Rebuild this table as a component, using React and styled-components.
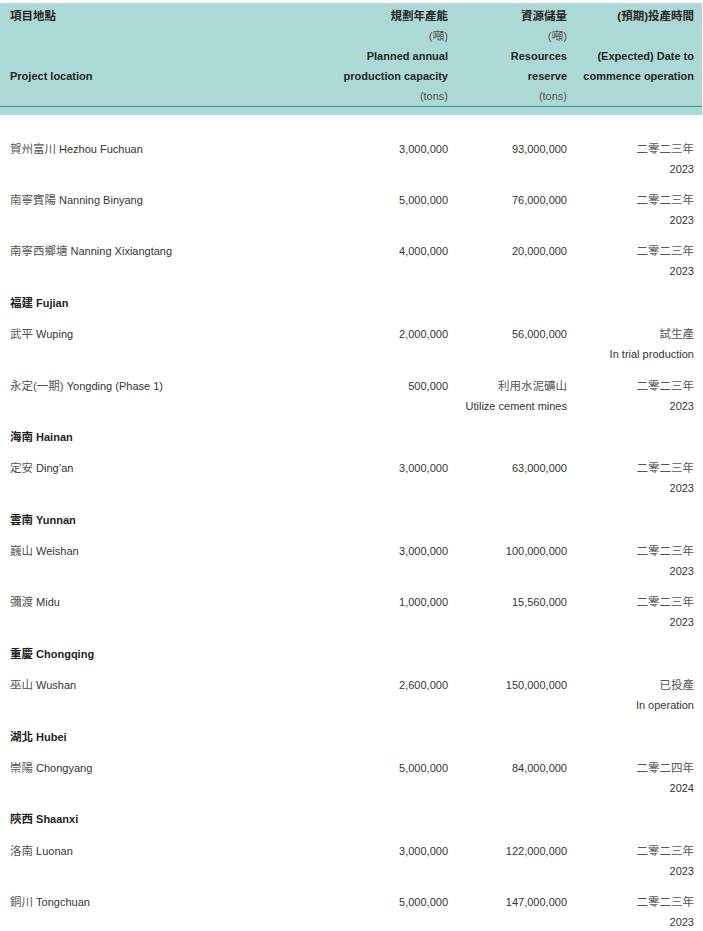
import React from "react";
import styled, { createGlobalStyle } from "styled-components";

const Global = createGlobalStyle`
  html, body { margin: 0; padding: 0; background: #ffffff; }
  body {
    font-family: "Liberation Sans", "Noto Sans CJK TC", sans-serif;
    font-size: 11px;
    color: #363636;
  }
`;

const Page = styled.div`
  width: 702px;
  padding-top: 3px;
`;

const Header = styled.div`
  background: #acd9d6;
  padding: 3px 0 8px;
`;

const Grid = styled.div`
  display: grid;
  grid-template-columns: 1fr 120px 119px 127px;
  padding: 0 8px 0 10px;
`;

const HeadGrid = styled(Grid)`
  border-bottom: 1px solid #2a9a8c;
`;

const HeadCell = styled.div`
  display: grid;
  grid-template-rows: repeat(5, 20px);
  text-align: ${(p) => (p.$left ? "left" : "right")};
`;

const HeadLine = styled.div`
  grid-row: ${(p) => p.$row};
  line-height: 20px;
  white-space: nowrap;
  font-weight: ${(p) => (p.$light ? 400 : 700)};
  color: ${(p) => (p.$light ? "#555" : "#262626")};
  font-size: ${(p) => (p.$zh ? "11.5px" : "11px")};
`;

const Body = styled.div`
  padding-top: 18px;
`;

const Row = styled(Grid)`
  padding-top: 5.7px;
  padding-bottom: 5.7px;
`;

const Cell = styled.div`
  line-height: 20px;
  text-align: ${(p) => (p.$left ? "left" : "right")};
  white-space: nowrap;
  display: flex;
  flex-direction: column;
  align-items: ${(p) => (p.$left ? "flex-start" : "flex-end")};
`;

const Zh = styled.span`
  font-size: 11.5px;
  color: #555;
`;

const Region = styled.div`
  line-height: 20px;
  font-weight: 700;
  color: #1f1f1f;
  grid-column: 1 / -1;
`;

const RegionZh = styled.span`
  font-size: 11.5px;
`;

const rows = [
  { zh: "賀州富川", en: "Hezhou Fuchuan", cap: "3,000,000", res: "93,000,000", dz: "二零二三年", de: "2023" },
  { zh: "南寧賓陽", en: "Nanning Binyang", cap: "5,000,000", res: "76,000,000", dz: "二零二三年", de: "2023" },
  { zh: "南寧西鄉塘", en: "Nanning Xixiangtang", cap: "4,000,000", res: "20,000,000", dz: "二零二三年", de: "2023" },
  { h: true, zh: "福建", en: "Fujian" },
  { zh: "武平", en: "Wuping", cap: "2,000,000", res: "56,000,000", dz: "試生產", de: "In trial production" },
  { zh: "永定(一期)", en: "Yongding (Phase 1)", cap: "500,000", res: "利用水泥礦山", resEn: "Utilize cement mines", dz: "二零二三年", de: "2023" },
  { h: true, zh: "海南", en: "Hainan" },
  { zh: "定安", en: "Ding’an", cap: "3,000,000", res: "63,000,000", dz: "二零二三年", de: "2023" },
  { h: true, zh: "雲南", en: "Yunnan" },
  { zh: "巍山", en: "Weishan", cap: "3,000,000", res: "100,000,000", dz: "二零二三年", de: "2023" },
  { zh: "彌渡", en: "Midu", cap: "1,000,000", res: "15,560,000", dz: "二零二三年", de: "2023" },
  { h: true, zh: "重慶", en: "Chongqing" },
  { zh: "巫山", en: "Wushan", cap: "2,600,000", res: "150,000,000", dz: "已投產", de: "In operation" },
  { h: true, zh: "湖北", en: "Hubei" },
  { zh: "崇陽", en: "Chongyang", cap: "5,000,000", res: "84,000,000", dz: "二零二四年", de: "2024" },
  { h: true, zh: "陝西", en: "Shaanxi" },
  { zh: "洛南", en: "Luonan", cap: "3,000,000", res: "122,000,000", dz: "二零二三年", de: "2023" },
  { zh: "銅川", en: "Tongchuan", cap: "5,000,000", res: "147,000,000", dz: "二零二三年", de: "2023" },
];

export default function App() {
  return (
    <Page>
      <Global />
      <Header>
        <HeadGrid>
          <HeadCell $left>
            <HeadLine $row={1} $zh>項目地點</HeadLine>
            <HeadLine $row={4}>Project location</HeadLine>
          </HeadCell>
          <HeadCell>
            <HeadLine $row={1} $zh>規劃年產能</HeadLine>
            <HeadLine $row={2} $light $zh>(噸)</HeadLine>
            <HeadLine $row={3}>Planned annual</HeadLine>
            <HeadLine $row={4}>production capacity</HeadLine>
            <HeadLine $row={5} $light>(tons)</HeadLine>
          </HeadCell>
          <HeadCell>
            <HeadLine $row={1} $zh>資源儲量</HeadLine>
            <HeadLine $row={2} $light $zh>(噸)</HeadLine>
            <HeadLine $row={3}>Resources</HeadLine>
            <HeadLine $row={4}>reserve</HeadLine>
            <HeadLine $row={5} $light>(tons)</HeadLine>
          </HeadCell>
          <HeadCell>
            <HeadLine $row={1} $zh>(預期)投產時間</HeadLine>
            <HeadLine $row={3}>(Expected) Date to</HeadLine>
            <HeadLine $row={4}>commence operation</HeadLine>
          </HeadCell>
        </HeadGrid>
      </Header>
      <Body>
        {rows.map((r, i) =>
          r.h ? (
            <Row key={i}>
              <Region>
                <RegionZh>{r.zh}</RegionZh> {r.en}
              </Region>
            </Row>
          ) : (
            <Row key={i}>
              <Cell $left>
                <span>
                  <Zh>{r.zh}</Zh> {r.en}
                </span>
              </Cell>
              <Cell>{r.cap}</Cell>
              <Cell>
                {r.resEn ? (
                  <>
                    <Zh>{r.res}</Zh>
                    <span>{r.resEn}</span>
                  </>
                ) : (
                  r.res
                )}
              </Cell>
              <Cell>
                <Zh>{r.dz}</Zh>
                <span>{r.de}</span>
              </Cell>
            </Row>
          )
        )}
      </Body>
    </Page>
  );
}
